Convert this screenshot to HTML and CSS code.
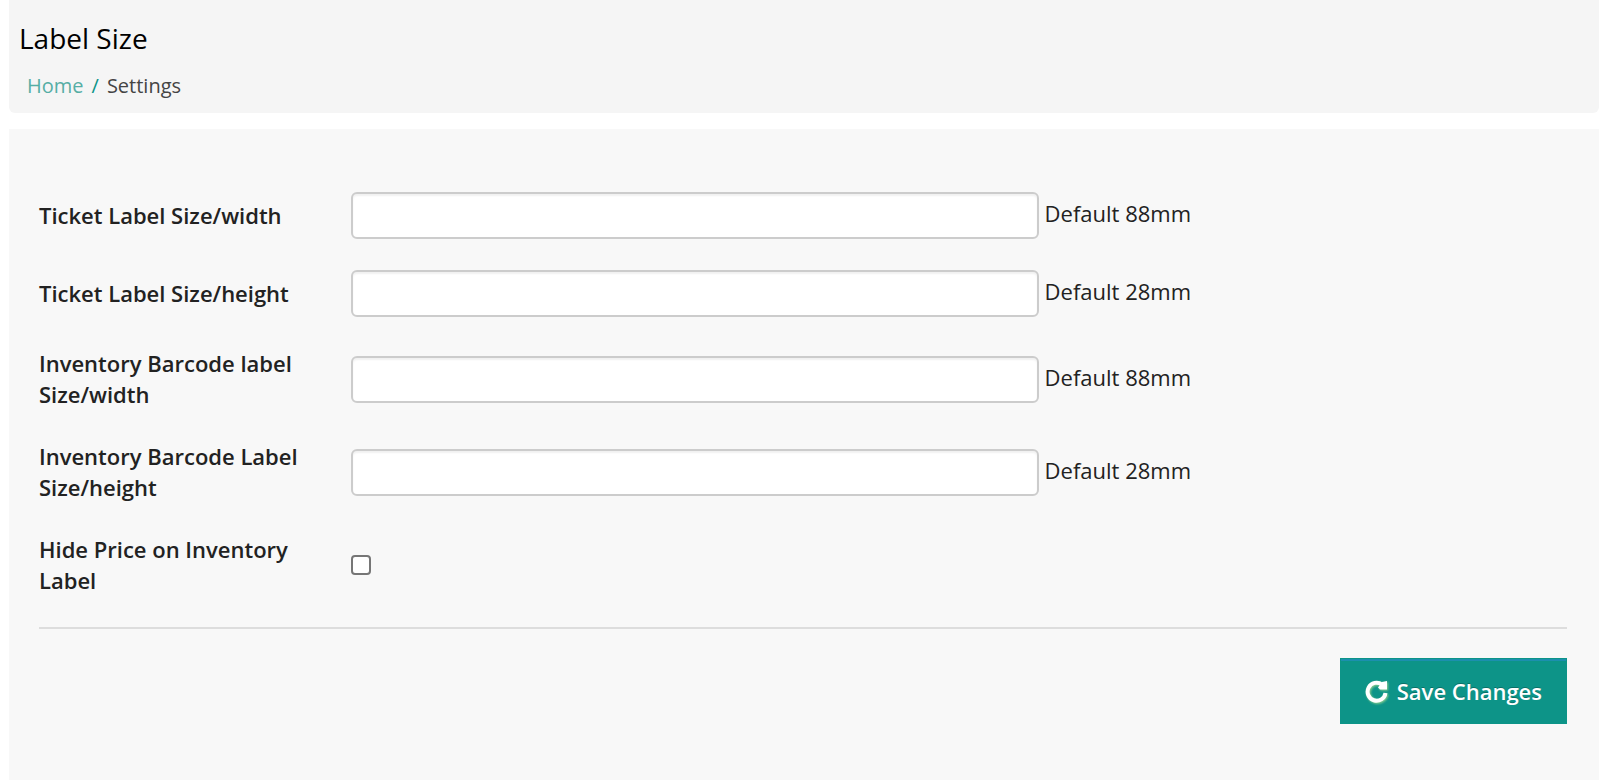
FILE: index.html
```html
<!DOCTYPE html>
<html lang="en">
<head>
<meta charset="utf-8">
<title>Label Size</title>
<link rel="stylesheet" href="styles.css">
</head>
<body>
<header class="page-header">
  <h1 class="page-title">Label Size</h1>
  <nav class="breadcrumb" aria-label="Breadcrumb">
    <a class="breadcrumb-link" href="#">Home</a>
    <span class="breadcrumb-divider">/</span>
    <span class="breadcrumb-current">Settings</span>
  </nav>
</header>
<main class="panel">
  <form class="form">
    <div class="row">
      <label class="label" for="ticket-width">Ticket Label Size/width</label>
      <input class="field" type="text" id="ticket-width">
      <span class="hint">Default 88mm</span>
    </div>
    <div class="row">
      <label class="label" for="ticket-height">Ticket Label Size/height</label>
      <input class="field" type="text" id="ticket-height">
      <span class="hint">Default 28mm</span>
    </div>
    <div class="row">
      <label class="label" for="barcode-width">Inventory Barcode label Size/width</label>
      <input class="field" type="text" id="barcode-width">
      <span class="hint">Default 88mm</span>
    </div>
    <div class="row">
      <label class="label" for="barcode-height">Inventory Barcode Label Size/height</label>
      <input class="field" type="text" id="barcode-height">
      <span class="hint">Default 28mm</span>
    </div>
    <div class="row">
      <label class="label" for="hide-price">Hide Price on Inventory Label</label>
      <input class="checkbox" type="checkbox" id="hide-price">
    </div>
    <div class="actions">
      <button class="save" type="submit">
        <svg class="save-icon" viewBox="0 0 24 28" aria-hidden="true">
          <path class="save-icon-ring" d="M17 7.500A9 9 0 1 0 20.500 16"/>
          <path class="save-icon-head" d="M22 4V12.500H15L13 10.500L17 5z"/>
        </svg>
        <span>Save Changes</span>
      </button>
    </div>
  </form>
</main>
</body>
</html>
```
FILE: styles.css
```css
* {
  box-sizing: border-box;
}

body {
  display: flex;
  flex-direction: column;
  gap: 16px;
  min-height: 100vh;
  margin: 0;
  padding: 0 1px 0 9px;
  background: #fff;
  color: #222;
  font-family: "Open Sans", "Liberation Sans", sans-serif;
  font-size: 22px;
  line-height: 31px;
}

.page-header {
  padding: 19px 10px 12px;
  border-radius: 0 0 6px 6px;
  background: #f5f5f5;
}

.page-title {
  margin: 0;
  color: #000;
  font-size: 28px;
  font-weight: 400;
  line-height: 38px;
}

.breadcrumb {
  display: flex;
  gap: 8px;
  padding: 13px 8px 0;
  font-size: 20px;
}

.breadcrumb-link {
  color: #55aea5;
  text-decoration: none;
}

.breadcrumb-divider {
  color: #0d9488;
}

.breadcrumb-current {
  color: #444;
}

.panel {
  flex: 1;
  padding: 63px 32px 55px 30px;
  background: #f8f8f8;
}

.form {
  display: flex;
  flex-direction: column;
  gap: 31px;
}

.row {
  display: flex;
  align-items: center;
}

.label {
  flex: 0 0 272px;
  margin-right: 40px;
  font-weight: 600;
}

.field {
  width: 45%;
  height: 47px;
  margin: 0;
  padding: 6px 12px;
  border: 2px solid #ccc;
  border-radius: 6px;
  background: #fff;
  box-shadow: inset 0 2px 2px rgba(0, 0, 0, 0.06);
  color: #222;
  font: inherit;
}

.hint {
  margin-left: 6px;
  padding-bottom: 4px;
}

.checkbox {
  appearance: none;
  width: 20px;
  height: 20px;
  margin: 0;
  border: 2px solid #767676;
  border-radius: 4px;
  background: #fff;
}

.checkbox:checked {
  background: #0d9488;
}

.actions {
  display: flex;
  justify-content: flex-end;
  padding-top: 29px;
  border-top: 2px solid #ddd;
}

.save {
  display: flex;
  align-items: center;
  gap: 8px;
  height: 66px;
  padding: 0 24px;
  border: 1px solid #0d9488;
  background: #0d9488;
  box-shadow: inset 0 2px 0 #1c8fae;
  color: #fff;
  font: inherit;
  font-weight: 600;
  text-shadow: 0 -1px 0 rgba(0, 0, 0, 0.25);
}

.save-icon {
  width: 24px;
  height: 28px;
  fill: none;
  filter: drop-shadow(1px 1px 1px #8fd08f);
}

.save-icon-ring {
  stroke: #fff;
  stroke-width: 4;
}

.save-icon-head {
  fill: #fff;
}
```
